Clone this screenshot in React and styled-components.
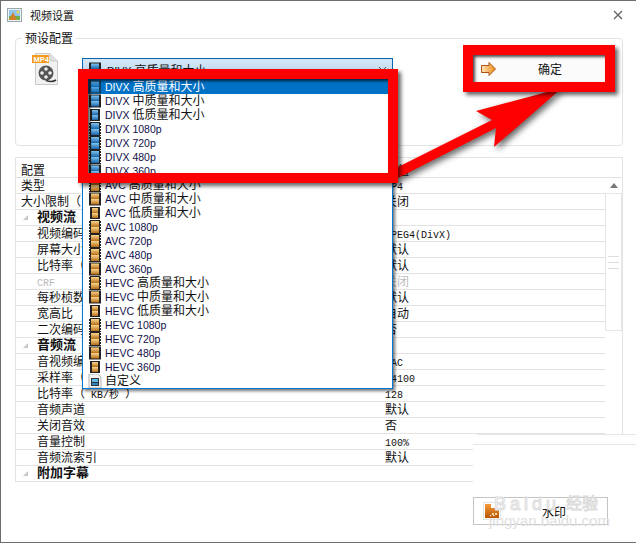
import React from "react";
import styled, { createGlobalStyle } from "styled-components";

const CJK = `"Noto Sans CJK SC", sans-serif`;

const GlobalStyle = createGlobalStyle`
  html, body {
    margin: 0;
    padding: 0;
    background: #fff;
  }
  * {
    box-sizing: border-box;
  }
`;

const Window = styled.div`
  position: relative;
  width: 636px;
  height: 543px;
  background: #fff;
  border: 1px solid #6d6d6d;
  border-right: none;
  overflow: hidden;
  font-family: "Liberation Mono", ${CJK};
  font-size: 12px;
  color: #111;
`;

const TitleBar = styled.div`
  display: flex;
  align-items: center;
  height: 29px;
  padding: 0 13px 1px 6px;
`;

const TitleText = styled.span`
  margin-left: 8px;
  font-family: ${CJK};
  font-size: 11px;
  flex: 1;
`;

const Group = styled.fieldset`
  height: 116px;
  margin: 0 13px 0 14px;
  padding: 0;
  border: 1px solid #e3e3e3;
  border-radius: 4px;
`;

const GroupLegend = styled.legend`
  margin-left: 6px;
  padding: 0 3px;
  height: 16px;
  line-height: 15px;
  font-family: ${CJK};
  font-size: 12px;
`;

const GroupBody = styled.div`
  display: flex;
  align-items: flex-start;
  padding: 7px 0 0 16px;
`;

const Combo = styled.div`
  display: flex;
  align-items: center;
  gap: 5px;
  width: 311px;
  height: 22px;
  margin: 5px 0 0 22px;
  padding: 0 5px;
  border: 1px solid #0a64ad;
  background: linear-gradient(#d4e7f6, #b8d7f0);
  font-family: "Liberation Sans", ${CJK};
  font-size: 10.5px;
`;

const ComboText = styled.span`
  flex: 1;
`;

const ConfirmButton = styled.div`
  display: flex;
  align-items: center;
  width: 138px;
  height: 33px;
  margin: -1px 0 0 77px;
  padding-left: 10px;
  background: #fbfbfb;
  border: 1px solid #d8d8d8;
`;

const ConfirmLabel = styled.span`
  margin-left: 42px;
  font-family: ${CJK};
  font-size: 12px;
`;

const Table = styled.div`
  margin: 11px 13px 0 14px;
  border: 1px solid #e3e3e3;
`;

const HeaderRow = styled.div`
  display: grid;
  grid-template-columns: 367px 1fr;
  height: 20px;
  line-height: 23px;
  border-bottom: 1px solid #e3e3e3;
  overflow: hidden;
`;

const HeaderCell = styled.div`
  padding-left: ${(p) => p.$pad}px;
  font-family: ${CJK};
  font-size: 12px;
`;

const TableBody = styled.div`
  display: flex;
`;

const Rows = styled.div`
  width: 590px;
`;

const Row = styled.div`
  display: grid;
  grid-template-columns: 367px 1fr;
  height: 16px;
  line-height: 15px;
  border-bottom: 1px solid #e3e3e3;
  white-space: nowrap;
  overflow: hidden;
  color: ${(p) => (p.$muted ? "#bbb" : "#111")};

  &:last-child {
    border-bottom: none;
    height: 15px;
  }
`;

const LabelCell = styled.div`
  display: flex;
  align-items: center;
  padding: ${(p) => (p.$bold ? 0 : 2)}px 0 0 ${(p) => p.$pad}px;
  font-weight: ${(p) => (p.$bold ? 700 : 400)};
  font-size: ${(p) => (p.$bold ? 13 : 12)}px;
`;

const ValueCell = styled.div`
  padding: 2px 0 0 2px;
  font-size: ${(p) => (p.$latin ? 10 : 12)}px;
`;

const Latin = styled.span`
  margin: 0 ${(p) => (p.$flush ? 0 : 6)}px;
  font-size: 10px;
`;

const Twisty = styled.span`
  width: 0;
  height: 0;
  margin-right: 9px;
  border-left: 5px solid transparent;
  border-bottom: 5px solid #c9c9c9;
`;

const ScrollTrack = styled.div`
  display: flex;
  flex-direction: column;
  align-items: center;
  width: 17px;
`;

const ScrollUp = styled.span`
  margin-top: 5px;
  width: 0;
  height: 0;
  border-left: 4px solid transparent;
  border-right: 4px solid transparent;
  border-bottom: 5px solid #777;
`;

const ScrollThumb = styled.div`
  display: flex;
  flex-direction: column;
  align-items: center;
  justify-content: center;
  gap: 5px;
  width: 17px;
  height: 138px;
  margin-top: 5px;
  border: 1px solid #e6e6e6;
`;

const Grip = styled.span`
  width: 11px;
  height: 1px;
  background: #dcdcdc;
`;

const Footer = styled.div`
  position: relative;
  z-index: 2;
  display: flex;
  justify-content: flex-end;
  margin: 15px 28px 0 0;
`;

const WatermarkButton = styled.div`
  position: relative;
  display: flex;
  align-items: center;
  width: 135px;
  height: 28px;
  padding-left: 9px;
  border: 1px solid #c4c4c4;
`;

const WatermarkLabel = styled.span`
  margin-left: 41px;
  font-family: ${CJK};
  font-size: 12px;
`;

const Stamp = styled.span`
  position: absolute;
  left: ${(p) => p.$left}px;
  top: ${(p) => p.$top}px;
  font-family: "Liberation Sans", ${CJK};
  font-size: ${(p) => p.$size}px;
  letter-spacing: ${(p) => p.$spacing || 0}px;
  line-height: 1;
  white-space: nowrap;
  color: ${(p) => (p.$outline ? "#fff" : "#e0e0e0")};
  -webkit-text-stroke: ${(p) => (p.$outline ? "1px #dcdcdc" : "0")};
  pointer-events: none;
`;

/* 截图里右下角被白色盖住的区域 */
const Patch = styled.div`
  position: absolute;
  z-index: 1;
  left: ${(p) => p.$left}px;
  top: ${(p) => p.$top}px;
  right: 0;
  height: ${(p) => p.$height}px;
  background: #fff;
  border-top: 1px solid #e6e6e6;
`;

const DropList = styled.div`
  position: absolute;
  z-index: 3;
  left: 81px;
  top: 78px;
  width: 311px;
  padding-left: 1px;
  border: 1px solid #0078d7;
  background: #fff;
  box-shadow: 2px 2px 3px rgba(0, 0, 0, 0.55);
  font-family: "Liberation Sans", ${CJK};
  font-size: 10.5px;
`;

const DropItem = styled.div`
  display: flex;
  align-items: center;
  gap: 3px;
  height: 14px;
  padding-left: 4px;
  line-height: 14px;
  white-space: nowrap;
  overflow: hidden;
  background: ${(p) => (p.$selected ? "#0072c6" : "transparent")};
  color: ${(p) => (p.$selected ? "#fff" : "#10104a")};
`;

const CjkPart = styled.span`
  font-size: 12px;
  color: ${(p) => (p.$selected ? "#fff" : "#111")};
`;

const RedBox = styled.div`
  position: absolute;
  z-index: 5;
  left: ${(p) => p.$left}px;
  top: ${(p) => p.$top}px;
  width: ${(p) => p.$width}px;
  height: ${(p) => p.$height}px;
  border: 10px solid #ff0000;
  box-shadow: 3px 3px 4px rgba(0, 0, 0, 0.6), inset 2px 2px 3px rgba(0, 0, 0, 0.7);
`;

const ArrowSvg = styled.svg`
  position: absolute;
  z-index: 4;
  left: 380px;
  top: 70px;
  filter: drop-shadow(3px 3px 3px rgba(0, 0, 0, 0.6));
`;

const IconSvg = styled.svg`
  flex: none;
  opacity: ${(p) => (p.$faded ? 0.65 : 1)};
`;

function FilmIcon({ tone = "blue", kind = "strip", faded }) {
  const c = tone === "blue" ? ["#7cc5f0", "#1a62a8"] : ["#fbd68c", "#b46c18"];
  const id = `film-${tone}`;
  const x = kind === "low" ? 2 : 1;
  const w = kind === "low" ? 10 : 12;
  const y = kind === "low" ? 1 : kind === "mid" ? 0.5 : 0;
  const h = 14 - y * 2;
  return (
    <IconSvg width="14" height="14" viewBox="0 0 14 14" $faded={faded}>
      <defs>
        <linearGradient id={id} x1="0" y1="0" x2="0" y2="1">
          <stop offset="0" stopColor={c[0]} />
          <stop offset="1" stopColor={c[1]} />
        </linearGradient>
      </defs>
      <rect x={x} y={y} width={w} height={h} fill="#222" />
      <rect x={x + 2} y={y + 1} width={w - 4} height={h / 2 - 1} fill={`url(#${id})`} />
      <rect x={x + 2} y={y + h / 2} width={w - 4} height={h / 2 - 1} fill={`url(#${id})`} />
      {kind === "strip" &&
        [1, 4, 7, 10, 13].map((dy) => (
          <g key={dy} fill="#fff">
            <rect x={x} y={dy - 1} width="1" height="1" />
            <rect x={x + w - 1} y={dy - 1} width="1" height="1" />
          </g>
        ))}
    </IconSvg>
  );
}

function CustomIcon() {
  return (
    <IconSvg width="14" height="14" viewBox="0 0 14 14">
      <path d="M1 0H10L13 3V14H1Z" fill="#f2f2f2" stroke="#b5b5b5" />
      <rect x="3" y="4" width="8" height="8" fill="#333" />
      <rect x="4" y="5" width="6" height="3" fill="#5cb8e6" />
      <rect x="4" y="9" width="6" height="2" fill="#2f86c5" />
    </IconSvg>
  );
}

function PictureIcon() {
  return (
    <IconSvg width="15" height="14" viewBox="0 0 15 14">
      <rect x="0.5" y="0.5" width="14" height="13" fill="#eef3f7" stroke="#9aa6ad" />
      <rect x="2" y="2" width="11" height="6" fill="#8dc7ee" />
      <rect x="2" y="8" width="11" height="4" fill="#6fb04a" />
      <path d="M2 12L6 4L10 12Z" fill="#d2802a" />
      <circle cx="11" cy="4" r="1.5" fill="#f6d34f" />
    </IconSvg>
  );
}

function Mp4Icon() {
  return (
    <IconSvg width="28" height="32" viewBox="-2 0 28 32">
      <path d="M1.5 0.5H16L23.5 8V31.5H1.5Z" fill="#f1f1f1" stroke="#c9c9c9" />
      <path d="M16 0.5V8H23.5" fill="#e0e0e0" stroke="#c9c9c9" />
      <rect x="-2" y="2" width="17" height="8" fill="#f39a1c" />
      <text x="-0.5" y="9" fontFamily="Liberation Sans" fontWeight="700" fontSize="7.5" fill="#fff">
        MP4
      </text>
      <circle cx="12" cy="20" r="7.5" fill="#555" />
      <circle cx="12" cy="16" r="1.8" fill="#eee" />
      <circle cx="8" cy="20" r="1.8" fill="#eee" />
      <circle cx="16" cy="20" r="1.8" fill="#eee" />
      <circle cx="12" cy="24" r="1.8" fill="#eee" />
      <path d="M12 27.5C16 29 19 29 22 27" fill="none" stroke="#333" strokeWidth="1.6" />
    </IconSvg>
  );
}

function OrangeArrow() {
  return (
    <IconSvg width="15" height="14" viewBox="0 0 15 14">
      <defs>
        <linearGradient id="go" x1="0" y1="0" x2="1" y2="0">
          <stop offset="0" stopColor="#fde3b8" />
          <stop offset="1" stopColor="#f08a10" />
        </linearGradient>
      </defs>
      <path d="M0.5 3.5H8V0.5L14.5 7L8 13.5V10.5H0.5Z" fill="url(#go)" stroke="#a8521a" />
    </IconSvg>
  );
}

function StampIcon() {
  return (
    <IconSvg width="18" height="18" viewBox="0 0 18 18">
      <defs>
        <linearGradient id="wm" x1="0" y1="0" x2="0" y2="1">
          <stop offset="0" stopColor="#f79a3a" />
          <stop offset="1" stopColor="#b85400" />
        </linearGradient>
      </defs>
      <rect x="0.5" y="0.5" width="17" height="17" fill="#fff" stroke="#c8c8c8" strokeDasharray="1 1" />
      <path d="M2 2H8V6H16V16H2Z" fill="url(#wm)" />
      <rect x="9" y="11" width="2" height="2" fill="#ffd9a8" />
      <rect x="12" y="11" width="2" height="2" fill="#ffd9a8" />
    </IconSvg>
  );
}

const QUALITY = ["高质量和大小", "中质量和大小", "低质量和大小"];

const dropItems = [
  { pre: "DIVX ", cjk: QUALITY[0], tone: "blue", kind: "mid", selected: true },
  { pre: "DIVX ", cjk: QUALITY[1], tone: "blue", kind: "mid" },
  { pre: "DIVX ", cjk: QUALITY[2], tone: "blue", kind: "low" },
  { pre: "DIVX 1080p", tone: "blue", kind: "strip" },
  { pre: "DIVX 720p", tone: "blue", kind: "strip" },
  { pre: "DIVX 480p", tone: "blue", kind: "strip" },
  { pre: "DIVX 360p", tone: "blue", kind: "mid" },
  { pre: "AVC ", cjk: QUALITY[0], tone: "orange", kind: "strip" },
  { pre: "AVC ", cjk: QUALITY[1], tone: "orange", kind: "mid" },
  { pre: "AVC ", cjk: QUALITY[2], tone: "orange", kind: "low" },
  { pre: "AVC 1080p", tone: "orange", kind: "strip" },
  { pre: "AVC 720p", tone: "orange", kind: "strip" },
  { pre: "AVC 480p", tone: "orange", kind: "strip" },
  { pre: "AVC 360p", tone: "orange", kind: "mid" },
  { pre: "HEVC ", cjk: QUALITY[0], tone: "orange", kind: "strip" },
  { pre: "HEVC ", cjk: QUALITY[1], tone: "orange", kind: "mid" },
  { pre: "HEVC ", cjk: QUALITY[2], tone: "orange", kind: "low" },
  { pre: "HEVC 1080p", tone: "orange", kind: "strip" },
  { pre: "HEVC 720p", tone: "orange", kind: "strip" },
  { pre: "HEVC 480p", tone: "orange", kind: "mid" },
  { pre: "HEVC 360p", tone: "orange", kind: "low" },
];

const tableRows = [
  { label: "类型", unit: "", value: "MP4", latin: true, pad: 5 },
  { label: "大小限制（", unit: "MB", tail: "）", value: "关闭", pad: 5 },
  { label: "视频流", section: true },
  { label: "视频编码", value: "MPEG4(DivX)", latin: true },
  { label: "屏幕大小", value: "默认" },
  { label: "比特率（", unit: "KB/秒", tail: "）", value: "默认" },
  { label: "", unit: "CRF", value: "关闭", muted: true },
  { label: "每秒桢数", value: "默认" },
  { label: "宽高比", value: "自动" },
  { label: "二次编码", value: "否" },
  { label: "音频流", section: true },
  { label: "音视频编码", value: "AAC", latin: true },
  { label: "采样率（", unit: "HZ", tail: "）", value: "44100", latin: true },
  { label: "比特率（", unit: "KB/秒", tail: "）", value: "128", latin: true },
  { label: "音频声道", value: "默认" },
  { label: "关闭音效", value: "否" },
  { label: "音量控制", value: "100%", latin: true },
  { label: "音频流索引", value: "默认" },
  { label: "附加字幕", section: true },
];

export default function App() {
  return (
    <>
      <GlobalStyle />
      <Window>
        <TitleBar>
          <PictureIcon />
          <TitleText>视频设置</TitleText>
          <svg width="10" height="10" viewBox="0 0 10 10">
            <path d="M1 1L9 9M9 1L1 9" stroke="#666" strokeWidth="1.4" />
          </svg>
        </TitleBar>

        <Group>
          <GroupLegend>预设配置</GroupLegend>
          <GroupBody>
            <Mp4Icon />
            <Combo>
              <FilmIcon tone="blue" kind="mid" />
              <ComboText>
                DIVX <CjkPart>高质量和大小</CjkPart>
              </ComboText>
              <svg width="9" height="6" viewBox="0 0 9 6">
                <path d="M1 1L4.5 5L8 1" fill="none" stroke="#555" />
              </svg>
            </Combo>
            <ConfirmButton>
              <OrangeArrow />
              <ConfirmLabel>确定</ConfirmLabel>
            </ConfirmButton>
          </GroupBody>
        </Group>

        <Table>
          <HeaderRow>
            <HeaderCell $pad={5}>配置</HeaderCell>
            <HeaderCell $pad={2}>数值</HeaderCell>
          </HeaderRow>
          <TableBody>
            <Rows>
              {tableRows.map((r, i) => (
                <Row key={i} $muted={r.muted}>
                  <LabelCell $pad={r.section ? 7 : r.pad || 21} $bold={r.section}>
                    {r.section && <Twisty />}
                    {r.label}
                    {r.unit && <Latin $flush={!r.label}>{r.unit}</Latin>}
                    {r.tail}
                  </LabelCell>
                  <ValueCell $latin={r.latin}>{r.value}</ValueCell>
                </Row>
              ))}
            </Rows>
            <ScrollTrack>
              <ScrollUp />
              <ScrollThumb>
                <Grip />
                <Grip />
                <Grip />
              </ScrollThumb>
            </ScrollTrack>
          </TableBody>
        </Table>

        <Patch $left={476} $top={433} $height={10} />
        <Patch $left={472} $top={443} $height={98} />

        <Footer>
          <WatermarkButton>
            <StampIcon />
            <WatermarkLabel>水印</WatermarkLabel>
            <Stamp $outline $left={20} $top={-3} $size={18} $spacing={4}>
              Baidu
            </Stamp>
            <Stamp $outline $left={92} $top={-2} $size={16}>
              经验
            </Stamp>
            <Stamp $left={15} $top={15} $size={15}>
              jingyan.baidu.com
            </Stamp>
          </WatermarkButton>
        </Footer>

        <DropList>
          {dropItems.map((d) => (
            <DropItem key={d.pre + (d.cjk || "")} $selected={d.selected}>
              <FilmIcon tone={d.tone} kind={d.kind} faded={d.selected} />
              <span>
                {d.pre}
                {d.cjk && <CjkPart $selected={d.selected}>{d.cjk}</CjkPart>}
              </span>
            </DropItem>
          ))}
          <DropItem>
            <CustomIcon />
            <CjkPart>自定义</CjkPart>
          </DropItem>
        </DropList>

        <ArrowSvg width="190" height="115" viewBox="0 0 190 115">
          <path
            d="M181 17L95 40L111 49L15 97Q13 103 17 107L115 57L113 76Z"
            fill="#ff0000"
          />
        </ArrowSvg>

        <RedBox $left={77} $top={68} $width={320} $height={114} />
        <RedBox $left={462} $top={44} $width={152} $height={47} />
      </Window>
    </>
  );
}
